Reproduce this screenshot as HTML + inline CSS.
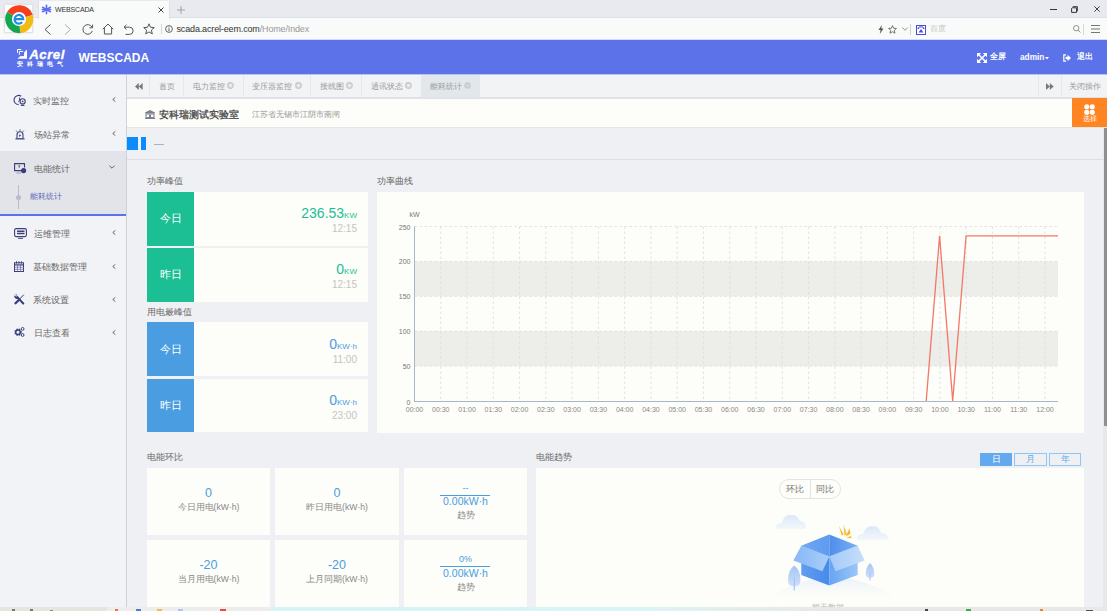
<!DOCTYPE html>
<html><head><meta charset="utf-8">
<style>
*{box-sizing:border-box}
html,body{margin:0;padding:0}
body{width:1107px;height:611px;overflow:hidden;position:relative;font-family:"Liberation Sans",sans-serif;background:#eef0f4;color:#666}
.a{position:absolute}
.t{position:absolute;white-space:nowrap;line-height:1}
svg{position:absolute;overflow:visible}
</style></head><body>

<!-- ============ BROWSER CHROME ============ -->
<div class="a" style="left:0;top:0;width:1107px;height:18px;background:#e8eaf0;border-bottom:1px solid #dcdfe6"></div>
<div class="a" style="left:0;top:18px;width:1107px;height:22px;background:#f9fafa"></div>
<div class="a" style="left:0;top:39px;width:1107px;height:1px;background:#d6daf2"></div>
<!-- browser logo -->
<div class="a" style="left:4px;top:4px;width:29px;height:29px;background:#fff;border:1px solid #e4e4e4;box-shadow:0 0 1px #ccc"></div>
<svg style="left:3.6px;top:3.6px" width="30" height="30" viewBox="0 0 27 27">
  <path d="M13.5 13.5 L2.7 7.3 A12.9 12.9 0 0 1 25.9 9.8 Z" fill="#f4401e"/>
  <path d="M13.5 13.5 L25.9 9.8 A12.9 12.9 0 0 1 14.6 26.4 Z" fill="#f2bb11"/>
  <path d="M13.5 13.5 L14.6 26.4 A12.9 12.9 0 0 1 2.7 7.3 Z" fill="#16a653"/>
  <circle cx="13.5" cy="13.5" r="6.4" fill="#fff"/>
  <path d="M9.6 13.6 H17.3 A3.9 3.9 0 1 0 16.4 16.3" fill="none" stroke="#1a8fe3" stroke-width="2"/>
</svg>
<!-- tab -->
<div class="a" style="left:37.5px;top:1px;width:132px;height:18px;background:#f9fafa;border-left:1px solid #dde0e6;border-right:1px solid #dde0e6"></div>
<svg style="left:42px;top:5px" width="9" height="9" viewBox="0 0 9 9"><g stroke="#5b72f0" stroke-width="1.6" stroke-linecap="round"><line x1="0.3" y1="4.5" x2="8.7" y2="4.5"/><line x1="4.5" y1="0.3" x2="4.5" y2="8.7"/><line x1="0.6" y1="2.3" x2="8.4" y2="6.7"/><line x1="0.6" y1="6.7" x2="8.4" y2="2.3"/></g><circle cx="4.5" cy="4.5" r="1.8" fill="#5b72f0"/></svg>
<div class="t" style="left:55px;top:6.3px;font-size:7px;color:#333;letter-spacing:-0.15px">WEBSCADA</div>
<svg style="left:158px;top:7px" width="6" height="6" viewBox="0 0 6 6"><path d="M0.5 0.5L5.5 5.5M5.5 0.5L0.5 5.5" stroke="#444" stroke-width="1"/></svg>
<svg style="left:177px;top:6px" width="8" height="8" viewBox="0 0 8 8"><path d="M4 0V8M0 4H8" stroke="#888" stroke-width="0.7"/></svg>
<!-- nav icons -->
<svg style="left:44px;top:24px" width="8" height="11" viewBox="0 0 8 11"><path d="M6.5 0.5L1 5.5L6.5 10.5" fill="none" stroke="#555" stroke-width="1"/></svg>
<svg style="left:64px;top:24px" width="8" height="11" viewBox="0 0 8 11"><path d="M1 0.5L6.5 5.5L1 10.5" fill="none" stroke="#aaa" stroke-width="1"/></svg>
<svg style="left:82px;top:24px" width="12" height="11" viewBox="0 0 12 11"><path d="M10 3.2A4.8 4.8 0 1 0 10.3 7" fill="none" stroke="#555" stroke-width="1"/><path d="M10.6 0.6V3.8H7.4" fill="none" stroke="#555" stroke-width="1"/></svg>
<svg style="left:102px;top:23px" width="12" height="12" viewBox="0 0 12 12"><path d="M0.8 6.2L6 1L11.2 6.2M2.4 4.8V11H9.6V4.8" fill="none" stroke="#555" stroke-width="1"/></svg>
<svg style="left:123px;top:24px" width="11" height="11" viewBox="0 0 11 11"><path d="M3.5 0.8L1 3.2L3.5 5.6M1 3.2H6.5A3.6 3.6 0 0 1 6.5 10.4H2.5" fill="none" stroke="#555" stroke-width="1"/></svg>
<svg style="left:143px;top:23px" width="12" height="12" viewBox="0 0 12 12"><path d="M6 0.8L7.5 4.3L11.3 4.6L8.4 7.1L9.3 10.9L6 8.9L2.7 10.9L3.6 7.1L0.7 4.6L4.5 4.3Z" fill="none" stroke="#555" stroke-width="1" stroke-linejoin="round"/></svg>
<div class="a" style="left:161px;top:24px;width:1px;height:10px;background:#d6d6d6"></div>
<svg style="left:165px;top:25px" width="8" height="8" viewBox="0 0 8 8"><circle cx="4" cy="4" r="3.4" fill="none" stroke="#555" stroke-width="0.9"/><path d="M4 3.3V6.2" stroke="#555" stroke-width="1"/><circle cx="4" cy="2" r="0.55" fill="#555"/></svg>
<div class="t" style="left:176.5px;top:24.5px;font-size:9px;letter-spacing:-0.15px;color:#333">scada.acrel-eem.com<span style="color:#999">/Home/Index</span></div>
<!-- right of address bar -->
<svg style="left:878px;top:25px" width="6" height="9" viewBox="0 0 6 9"><path d="M3.8 0L0.5 5H2.6L1.8 9L5.5 3.6H3.3Z" fill="#555"/></svg>
<svg style="left:888px;top:25px" width="9" height="9" viewBox="0 0 12 12"><path d="M6 0.8L7.5 4.3L11.3 4.6L8.4 7.1L9.3 10.9L6 8.9L2.7 10.9L3.6 7.1L0.7 4.6L4.5 4.3Z" fill="none" stroke="#666" stroke-width="1.2" stroke-linejoin="round"/></svg>
<svg style="left:902px;top:27px" width="6" height="4" viewBox="0 0 6 4"><path d="M0.3 0.5L3 3.3L5.7 0.5" fill="none" stroke="#777" stroke-width="0.8"/></svg>
<div class="a" style="left:910px;top:24px;width:1px;height:10.5px;background:#d0d0d0"></div>
<div class="a" style="left:916px;top:25px;width:10px;height:9.5px;border:1.3px solid #4a4ae0;background:#fff"></div>
<svg style="left:917px;top:26px" width="8" height="7" viewBox="0 0 8 7"><circle cx="1.4" cy="2.2" r="0.9" fill="#4a4ae0"/><circle cx="3" cy="0.9" r="0.8" fill="#4a4ae0"/><circle cx="5" cy="0.9" r="0.8" fill="#4a4ae0"/><circle cx="6.6" cy="2.2" r="0.9" fill="#4a4ae0"/><path d="M4 3L1.6 6.6H6.4Z" fill="#4a4ae0"/></svg>
<div class="t" style="left:930px;top:25px;font-size:8px;color:#c8c8c8">百度</div>
<svg style="left:1073px;top:25px" width="8" height="8" viewBox="0 0 8 8"><circle cx="3.2" cy="3.2" r="2.7" fill="none" stroke="#777" stroke-width="0.8"/><path d="M5.1 5.1L7.4 7.4" stroke="#777" stroke-width="0.8"/></svg>
<div class="a" style="left:1083px;top:24px;width:1px;height:11px;background:#d8d8d8"></div>
<svg style="left:1091px;top:25px" width="9" height="8" viewBox="0 0 9 8"><path d="M0 0.5H9M0 4H9M0 7.5H9" stroke="#666" stroke-width="0.9"/></svg>
<!-- window controls -->
<div class="a" style="left:1050px;top:9px;width:7px;height:1px;background:#333"></div>
<svg style="left:1071px;top:6px" width="7" height="7" viewBox="0 0 7 7"><path d="M1.2 1.8H5.6V6.4H0.6V2.4Z" fill="none" stroke="#333" stroke-width="1"/><path d="M1.8 0.6H6.4V5.2" fill="none" stroke="#333" stroke-width="0.9"/></svg>
<svg style="left:1094px;top:6px" width="6" height="6" viewBox="0 0 6 6"><path d="M0.3 0.3L5.7 5.7M5.7 0.3L0.3 5.7" stroke="#333" stroke-width="0.9"/></svg>

<!-- ============ HEADER ============ -->
<div class="a" style="left:0;top:40px;width:1107px;height:34px;background:#5b72e8"></div>
<!-- logo -->
<svg style="left:17px;top:49px" width="10" height="10" viewBox="0 0 10 10"><path d="M0.5 9.8L10 0.5V9.8Z" fill="#fff"/><rect x="1.9" y="1.9" width="5.2" height="5.2" fill="#5b72e8"/><path d="M0.5 3.8V0.5H4.2M2.4 5.8V2.4H6.2" fill="none" stroke="#fff" stroke-width="1"/></svg>
<div class="t" style="left:29.2px;top:47.5px;font-size:13.3px;font-weight:bold;font-style:italic;color:#fff;letter-spacing:0.5px;-webkit-text-stroke:0.3px #fff">Acrel</div>
<div class="t" style="left:17px;top:60.8px;font-size:6.3px;color:#fff;letter-spacing:4px;font-weight:bold">安科瑞电气</div>
<div class="t" style="left:78.5px;top:52px;font-size:12px;font-weight:bold;color:#fff">WEBSCADA</div>
<!-- right -->
<svg style="left:977px;top:52.5px" width="10" height="10" viewBox="0 0 10 10"><path d="M1.5 1.5L8.5 8.5M8.5 1.5L1.5 8.5" stroke="#fff" stroke-width="1.6"/><g fill="#fff"><path d="M0 0H4.2L0 4.2Z"/><path d="M10 0V4.2L5.8 0Z"/><path d="M0 10V5.8L4.2 10Z"/><path d="M10 10H5.8L10 5.8Z"/></g></svg>
<div class="t" style="left:990px;top:52.5px;font-size:8px;font-weight:bold;color:#fff;margin-top:0.8px">全屏</div>
<div class="t" style="left:1020px;top:52.5px;font-size:8.3px;font-weight:bold;color:#fff">admin</div>
<svg style="left:1045px;top:56.5px" width="4" height="3" viewBox="0 0 4 3"><path d="M0 0H4L2 2.5Z" fill="#fff"/></svg>
<svg style="left:1063px;top:53.5px" width="8" height="8" viewBox="0 0 8 8"><path d="M3 0.8H0.8V7.2H3" fill="none" stroke="#fff" stroke-width="1.2"/><path d="M2.6 2.8H4.6V0.8L8 4L4.6 7.2V5.2H2.6Z" fill="#fff"/></svg>
<div class="t" style="left:1076.5px;top:52.5px;font-size:8px;font-weight:bold;color:#fff;margin-top:0.8px">退出</div>

<!-- ============ SIDEBAR ============ -->
<div class="a" style="left:0;top:74px;width:127px;height:533px;background:#f2f3f6;border-right:1px solid #cfd2da"></div>
<div class="a" style="left:0;top:151px;width:126px;height:65px;background:#e3e4e9"></div>
<div class="a" style="left:0;top:214px;width:126px;height:2px;background:#5b72e8"></div>
<!-- sidebar items -->
<svg style="left:14.5px;top:95px" width="11" height="11" viewBox="0 0 11 11"><path d="M6.2 1.2A4.6 4.6 0 1 0 3.6 9.6" fill="none" stroke="#3b3d7c" stroke-width="1.1"/><path d="M4.6 2.6V5.3L3.2 6.6" fill="none" stroke="#3b3d7c" stroke-width="1"/><circle cx="7.6" cy="6.4" r="2.6" fill="none" stroke="#3b3d7c" stroke-width="1.1"/><circle cx="7.6" cy="6.4" r="0.9" fill="#3b3d7c"/><path d="M5.8 10.4H9.4" stroke="#3b3d7c" stroke-width="1.1"/></svg>
<div class="t" style="left:33px;top:96.8px;font-size:9px;color:#666">实时监控</div>
<svg style="left:111.5px;top:97px" width="4" height="5" viewBox="0 0 4 5"><path d="M3.3 0.4L0.8 2.5L3.3 4.6" fill="none" stroke="#555" stroke-width="0.9"/></svg>

<svg style="left:15px;top:129px" width="10" height="11" viewBox="0 0 10 11"><path d="M2 9V5.8A3 3 0 0 1 8 5.8V9" fill="none" stroke="#3b3d7c" stroke-width="1.1"/><path d="M0.5 9.8H9.5" stroke="#3b3d7c" stroke-width="1.3"/><path d="M5 0.3V1.8M1.2 1.6L2.2 2.8M8.8 1.6L7.8 2.8" stroke="#3b3d7c" stroke-width="0.9"/><path d="M4.2 5.3L6.2 6.6L4.2 7.9Z" fill="#3b3d7c"/></svg>
<div class="t" style="left:33.5px;top:130.5px;font-size:9px;color:#666">场站异常</div>
<svg style="left:111.5px;top:131px" width="4" height="5" viewBox="0 0 4 5"><path d="M3.3 0.4L0.8 2.5L3.3 4.6" fill="none" stroke="#555" stroke-width="0.9"/></svg>

<svg style="left:14px;top:162.5px" width="13" height="11" viewBox="0 0 13 11"><path d="M10.5 4.5V0.6H0.6V7.6H7" fill="none" stroke="#3b3d7c" stroke-width="1.1"/><path d="M2.5 10H7" stroke="#9a9ab8" stroke-width="1"/><path d="M5.2 2V4.6" stroke="#3b3d7c" stroke-width="1"/><circle cx="9.6" cy="7.6" r="2.6" fill="#3b3d7c"/></svg>
<div class="t" style="left:34px;top:165px;font-size:9px;color:#666">电能统计</div>
<svg style="left:109px;top:165px" width="6" height="4" viewBox="0 0 6 4"><path d="M0.4 0.6L3 3.2L5.6 0.6" fill="none" stroke="#555" stroke-width="0.9"/></svg>
<div class="a" style="left:18px;top:185px;width:1px;height:24px;background:#b9bccb"></div>
<div class="a" style="left:16px;top:194.5px;width:5px;height:5px;border-radius:50%;background:#b9bccb"></div>
<div class="t" style="left:30px;top:193px;font-size:8.2px;color:#5a64b8">能耗统计</div>

<svg style="left:14px;top:228px" width="13" height="11" viewBox="0 0 13 11"><rect x="0.6" y="0.6" width="11.8" height="8" rx="1.5" fill="none" stroke="#3b3d7c" stroke-width="1.1"/><path d="M3 3.2H10.5M3 5.5H10.5" stroke="#3b3d7c" stroke-width="1.4"/><path d="M4 10.4H9" stroke="#3b3d7c" stroke-width="0.9"/></svg>
<div class="t" style="left:34px;top:229.5px;font-size:9px;color:#666">运维管理</div>
<svg style="left:111.5px;top:230px" width="4" height="5" viewBox="0 0 4 5"><path d="M3.3 0.4L0.8 2.5L3.3 4.6" fill="none" stroke="#555" stroke-width="0.9"/></svg>

<svg style="left:14px;top:260.5px" width="10" height="11" viewBox="0 0 10 11"><rect x="0.5" y="1.8" width="9" height="8.7" fill="none" stroke="#3b3d7c" stroke-width="1"/><path d="M0.5 3.9H9.5" stroke="#3b3d7c" stroke-width="1.2"/><path d="M0.5 6.2H9.5M0.5 8.3H9.5M3.5 3.9V10.5M6.5 3.9V10.5" stroke="#6a6c9c" stroke-width="0.7"/><path d="M2.5 0.2V2.6M5 0.2V2.6M7.5 0.2V2.6" stroke="#3b3d7c" stroke-width="0.9"/></svg>
<div class="t" style="left:32.5px;top:262.5px;font-size:9px;color:#666">基础数据管理</div>
<svg style="left:111.5px;top:264px" width="4" height="5" viewBox="0 0 4 5"><path d="M3.3 0.4L0.8 2.5L3.3 4.6" fill="none" stroke="#555" stroke-width="0.9"/></svg>

<svg style="left:14px;top:294px" width="11" height="11" viewBox="0 0 11 11"><path d="M9.9 0.7L5.8 4.8" stroke="#3b3d7c" stroke-width="1"/><path d="M5.6 5.2L1.5 9.3" stroke="#3b3d7c" stroke-width="2.3" stroke-linecap="round"/><path d="M3.6 3.6L9.3 9.5" stroke="#3b3d7c" stroke-width="2" stroke-linecap="round"/><path d="M0.2 2.2A3 3 0 0 0 4.9 4.5L5.2 3.6L3 1.6L2.2 0.1A3 3 0 0 0 0.2 2.2Z" fill="#3b3d7c"/><path d="M0.8 0.6L2.6 2.4" stroke="#f2f3f6" stroke-width="1.3"/></svg>
<div class="t" style="left:32.6px;top:296px;font-size:9px;color:#666">系统设置</div>
<svg style="left:111.5px;top:297px" width="4" height="5" viewBox="0 0 4 5"><path d="M3.3 0.4L0.8 2.5L3.3 4.6" fill="none" stroke="#555" stroke-width="0.9"/></svg>

<svg style="left:14px;top:327px" width="11" height="10" viewBox="0 0 11 10"><circle cx="4" cy="5.2" r="2.6" fill="none" stroke="#3b3d7c" stroke-width="2.2" stroke-dasharray="1.2 0.9"/><circle cx="4" cy="5.2" r="2.4" fill="none" stroke="#3b3d7c" stroke-width="1.2"/><circle cx="8.6" cy="1.9" r="1.4" fill="none" stroke="#3b3d7c" stroke-width="1"/><circle cx="8.6" cy="8" r="1.4" fill="none" stroke="#3b3d7c" stroke-width="1"/></svg>
<div class="t" style="left:34px;top:328.5px;font-size:9px;color:#666">日志查看</div>
<svg style="left:111.5px;top:330px" width="4" height="5" viewBox="0 0 4 5"><path d="M3.3 0.4L0.8 2.5L3.3 4.6" fill="none" stroke="#555" stroke-width="0.9"/></svg>


<!-- ============ TAB BAR ============ -->
<div class="a" style="left:127px;top:74px;width:980px;height:25px;background:#f1f3f4;border-bottom:2px solid #dfe3e6"></div>
<!-- tabs -->
<div class="a" style="left:149px;top:74px;width:1px;height:23px;background:#e6e8eb"></div>
<div class="a" style="left:183px;top:74px;width:1px;height:23px;background:#e6e8eb"></div>
<div class="a" style="left:242.5px;top:74px;width:1px;height:23px;background:#e6e8eb"></div>
<div class="a" style="left:310px;top:74px;width:1px;height:23px;background:#e6e8eb"></div>
<div class="a" style="left:361px;top:74px;width:1px;height:23px;background:#e6e8eb"></div>
<div class="a" style="left:420.5px;top:74px;width:59.5px;height:23px;background:#e1e7eb"></div>
<div class="a" style="left:1038px;top:74px;width:1px;height:23px;background:#e6e8eb"></div>
<div class="a" style="left:1061px;top:74px;width:1px;height:23px;background:#e6e8eb"></div>
<svg style="left:135px;top:83px" width="8" height="7" viewBox="0 0 8 7"><path d="M3.8 0V7L0 3.5Z M7.6 0V7L3.8 3.5Z" fill="#777"/></svg>
<div class="t" style="left:158.5px;top:82.8px;font-size:8.2px;color:#9a9a9a">首页</div>
<div class="t" style="left:192.5px;top:82.8px;font-size:8.2px;color:#9a9a9a">电力监控</div>
<div class="t" style="left:251.5px;top:82.8px;font-size:8.2px;color:#9a9a9a">变压器监控</div>
<div class="t" style="left:319.5px;top:82.8px;font-size:8.2px;color:#9a9a9a">接线图</div>
<div class="t" style="left:370.5px;top:82.8px;font-size:8.2px;color:#9a9a9a">通讯状态</div>
<div class="t" style="left:429.5px;top:82.8px;font-size:8.2px;color:#9a9a9a">能耗统计</div>
<svg style="left:226.6px;top:82px" width="7" height="7" viewBox="0 0 7 7"><circle cx="3.5" cy="3.5" r="2.75" fill="#e3e4e6" stroke="#c6c8cb" stroke-width="1.3"/><path d="M2.6 2.6L4.4 4.4M4.4 2.6L2.6 4.4" stroke="#f4f5f6" stroke-width="0.8"/></svg>
<svg style="left:294.6px;top:82px" width="7" height="7" viewBox="0 0 7 7"><circle cx="3.5" cy="3.5" r="2.75" fill="#e3e4e6" stroke="#c6c8cb" stroke-width="1.3"/><path d="M2.6 2.6L4.4 4.4M4.4 2.6L2.6 4.4" stroke="#f4f5f6" stroke-width="0.8"/></svg>
<svg style="left:345.6px;top:82px" width="7" height="7" viewBox="0 0 7 7"><circle cx="3.5" cy="3.5" r="2.75" fill="#e3e4e6" stroke="#c6c8cb" stroke-width="1.3"/><path d="M2.6 2.6L4.4 4.4M4.4 2.6L2.6 4.4" stroke="#f4f5f6" stroke-width="0.8"/></svg>
<svg style="left:404.6px;top:82px" width="7" height="7" viewBox="0 0 7 7"><circle cx="3.5" cy="3.5" r="2.75" fill="#e3e4e6" stroke="#c6c8cb" stroke-width="1.3"/><path d="M2.6 2.6L4.4 4.4M4.4 2.6L2.6 4.4" stroke="#f4f5f6" stroke-width="0.8"/></svg>
<svg style="left:463.6px;top:82px" width="7" height="7" viewBox="0 0 7 7"><circle cx="3.5" cy="3.5" r="3.2" fill="#c8cacd"/><path d="M2.2 2.2L4.8 4.8M4.8 2.2L2.2 4.8" stroke="#e4e9ed" stroke-width="0.9"/></svg>
<svg style="left:1046px;top:83px" width="8" height="7" viewBox="0 0 8 7"><path d="M0 0V7L3.8 3.5Z M3.8 0V7L7.6 3.5Z" fill="#777"/></svg>
<div class="t" style="left:1069px;top:82.8px;font-size:8.2px;color:#9a9a9a">关闭操作</div>


<div class="a" style="left:0;top:74px;width:1107px;height:1px;background:#b9c2f0"></div>
<!-- ============ TITLE BAR ============ -->
<div class="a" style="left:127px;top:99px;width:945px;height:28px;background:#fdfdfa"></div>
<div class="a" style="left:1072px;top:98px;width:35px;height:29px;background:#ff8422"></div>
<div class="a" style="left:127px;top:127px;width:976px;height:1px;background:#e4e6ea"></div>
<svg style="left:144.5px;top:110px" width="10" height="9" viewBox="0 0 10 9"><path d="M5 0L10 2.6V3.4H0V2.6Z" fill="#7b7f8f"/><path d="M1 4H9V7.6H1Z" fill="none" stroke="#7b7f8f" stroke-width="1"/><rect x="4" y="4.8" width="2" height="3" fill="#7b7f8f"/><rect x="0" y="7.8" width="10" height="1.2" fill="#7b7f8f"/></svg>
<div class="t" style="left:159px;top:110.3px;font-size:9.8px;font-weight:bold;color:#555">安科瑞测试实验室</div>
<div class="t" style="left:252px;top:111.2px;font-size:8.2px;color:#999">江苏省无锡市江阴市南闸</div>
<!-- select button -->
<svg style="left:1084px;top:103.5px" width="11" height="11" viewBox="0 0 12 12"><g fill="#fff"><circle cx="3" cy="3" r="2.8"/><circle cx="9" cy="3" r="2.8"/><circle cx="3" cy="9" r="2.8"/><circle cx="9" cy="9" r="2.8"/></g></svg>
<div class="t" style="left:1082.5px;top:116.3px;font-size:6.8px;color:#fff">选择</div>

<!-- blue squares row -->
<div class="a" style="left:127px;top:137px;width:11px;height:13px;background:#0a8cff"></div>
<div class="a" style="left:141px;top:137px;width:5px;height:13px;background:#0a8cff"></div>
<div class="a" style="left:154px;top:144px;width:10px;height:1.2px;background:#9db8c8"></div>
<div class="a" style="left:127px;top:159px;width:976px;height:1px;background:#dcdee3"></div>

<!-- scrollbar -->
<div class="a" style="left:1103px;top:127px;width:4px;height:480px;background:#e7e8ec"></div>
<div class="a" style="left:1103.5px;top:128px;width:3.5px;height:298px;background:#8e8e93"></div>

<!-- ====== CONTENT ====== -->
<div class="t" style="left:147px;top:176.5px;font-size:9px;color:#666">功率峰值</div>
<div class="a" style="left:147px;top:192px;width:221px;height:53.5px;background:#fdfdf9"></div>
<div class="a" style="left:147px;top:192px;width:46.5px;height:53.5px;background:#1bbf93"></div>
<div class="t" style="left:160px;top:212.8px;font-size:10.5px;color:#fff">今日</div>
<div class="t" style="left:0;width:357px;text-align:right;top:205.7px;font-size:14px;color:#1bbf93">236.53<span style="font-size:8px">KW</span></div>
<div class="t" style="left:0;width:357px;text-align:right;top:223.5px;font-size:10px;color:#c4c4c4">12:15</div>

<div class="a" style="left:147px;top:248px;width:221px;height:53.5px;background:#fdfdf9"></div>
<div class="a" style="left:147px;top:248px;width:46.5px;height:53.5px;background:#1bbf93"></div>
<div class="t" style="left:160px;top:268.8px;font-size:10.5px;color:#fff">昨日</div>
<div class="t" style="left:0;width:357px;text-align:right;top:262.3px;font-size:14px;color:#1bbf93">0<span style="font-size:8px">KW</span></div>
<div class="t" style="left:0;width:357px;text-align:right;top:279.5px;font-size:10px;color:#c4c4c4">12:15</div>

<div class="t" style="left:147px;top:307.7px;font-size:9px;color:#666">用电最峰值</div>
<div class="a" style="left:147px;top:322px;width:221px;height:54px;background:#fdfdf9"></div>
<div class="a" style="left:147px;top:322px;width:46.5px;height:54px;background:#4a9de0"></div>
<div class="t" style="left:160px;top:343.5px;font-size:10.5px;color:#fff">今日</div>
<div class="t" style="left:0;width:357px;text-align:right;top:337px;font-size:14px;color:#4a9de0">0<span style="font-size:8px">KW·h</span></div>
<div class="t" style="left:0;width:357px;text-align:right;top:354.5px;font-size:10px;color:#c4c4c4">11:00</div>

<div class="a" style="left:147px;top:379px;width:221px;height:53px;background:#fdfdf9"></div>
<div class="a" style="left:147px;top:379px;width:46.5px;height:53px;background:#4a9de0"></div>
<div class="t" style="left:160px;top:400px;font-size:10.5px;color:#fff">昨日</div>
<div class="t" style="left:0;width:357px;text-align:right;top:393px;font-size:14px;color:#4a9de0">0<span style="font-size:8px">KW·h</span></div>
<div class="t" style="left:0;width:357px;text-align:right;top:410.5px;font-size:10px;color:#c4c4c4">23:00</div>

<!-- chart -->
<div class="t" style="left:377px;top:176.5px;font-size:9px;color:#666">功率曲线</div>
<div class="a" style="left:377px;top:192px;width:706.5px;height:240.5px;background:#fdfdf9"></div>
<svg style="left:0;top:0" width="1107" height="611" viewBox="0 0 1107 611">
  <rect x="414.5" y="261.4" width="643.5" height="34.9" fill="#ededea"/>
  <rect x="414.5" y="331.2" width="643.5" height="34.9" fill="#ededea"/>
  <g stroke="#dcdcdc" stroke-width="0.8" stroke-dasharray="2.5 2.5" id="hg">
    <line x1="414.5" y1="226.5" x2="1058" y2="226.5"/>
    <line x1="414.5" y1="261.4" x2="1058" y2="261.4"/>
    <line x1="414.5" y1="296.3" x2="1058" y2="296.3"/>
    <line x1="414.5" y1="331.2" x2="1058" y2="331.2"/>
    <line x1="414.5" y1="366.1" x2="1058" y2="366.1"/>
  </g>
  <g stroke="#dcdcdc" stroke-width="0.8" stroke-dasharray="2.5 2.5"><line x1="440.77" y1="226.5" x2="440.77" y2="401"/><line x1="467.04" y1="226.5" x2="467.04" y2="401"/><line x1="493.31" y1="226.5" x2="493.31" y2="401"/><line x1="519.58" y1="226.5" x2="519.58" y2="401"/><line x1="545.85" y1="226.5" x2="545.85" y2="401"/><line x1="572.12" y1="226.5" x2="572.12" y2="401"/><line x1="598.40" y1="226.5" x2="598.40" y2="401"/><line x1="624.67" y1="226.5" x2="624.67" y2="401"/><line x1="650.94" y1="226.5" x2="650.94" y2="401"/><line x1="677.21" y1="226.5" x2="677.21" y2="401"/><line x1="703.48" y1="226.5" x2="703.48" y2="401"/><line x1="729.75" y1="226.5" x2="729.75" y2="401"/><line x1="756.02" y1="226.5" x2="756.02" y2="401"/><line x1="782.29" y1="226.5" x2="782.29" y2="401"/><line x1="808.56" y1="226.5" x2="808.56" y2="401"/><line x1="834.83" y1="226.5" x2="834.83" y2="401"/><line x1="861.10" y1="226.5" x2="861.10" y2="401"/><line x1="887.38" y1="226.5" x2="887.38" y2="401"/><line x1="913.65" y1="226.5" x2="913.65" y2="401"/><line x1="939.92" y1="226.5" x2="939.92" y2="401"/><line x1="966.19" y1="226.5" x2="966.19" y2="401"/><line x1="992.46" y1="226.5" x2="992.46" y2="401"/><line x1="1018.73" y1="226.5" x2="1018.73" y2="401"/><line x1="1045.00" y1="226.5" x2="1045.00" y2="401"/></g>
  <line x1="414.5" y1="226.5" x2="414.5" y2="402" stroke="#a9b6c5" stroke-width="1"/>
  <line x1="414.5" y1="401.5" x2="1058" y2="401.5" stroke="#a9b6c5" stroke-width="1"/>
  <polyline points="926.2,401 939.6,235.9 952.7,401 966.1,235.9 1058,235.9" fill="none" stroke="#f47767" stroke-width="1.3" stroke-linejoin="miter"/>
</svg>
<div class="t" style="left:409.5px;top:210.5px;font-size:7px;color:#777">kW</div>
<div class="t" style="left:360px;width:50.5px;text-align:right;top:223.5px;font-size:7px;color:#777">250</div>
<div class="t" style="left:360px;width:50.5px;text-align:right;top:258.4px;font-size:7px;color:#777">200</div>
<div class="t" style="left:360px;width:50.5px;text-align:right;top:293.3px;font-size:7px;color:#777">150</div>
<div class="t" style="left:360px;width:50.5px;text-align:right;top:328.2px;font-size:7px;color:#777">100</div>
<div class="t" style="left:360px;width:50.5px;text-align:right;top:363.1px;font-size:7px;color:#777">50</div>
<div class="t" style="left:360px;width:50.5px;text-align:right;top:398.8px;font-size:7px;color:#777">0</div>

<div class="t" style="left:399.50px;width:30px;text-align:center;top:406px;font-size:7px;color:#888">00:00</div>
<div class="t" style="left:425.77px;width:30px;text-align:center;top:406px;font-size:7px;color:#888">00:30</div>
<div class="t" style="left:452.04px;width:30px;text-align:center;top:406px;font-size:7px;color:#888">01:00</div>
<div class="t" style="left:478.31px;width:30px;text-align:center;top:406px;font-size:7px;color:#888">01:30</div>
<div class="t" style="left:504.58px;width:30px;text-align:center;top:406px;font-size:7px;color:#888">02:00</div>
<div class="t" style="left:530.85px;width:30px;text-align:center;top:406px;font-size:7px;color:#888">02:30</div>
<div class="t" style="left:557.12px;width:30px;text-align:center;top:406px;font-size:7px;color:#888">03:00</div>
<div class="t" style="left:583.40px;width:30px;text-align:center;top:406px;font-size:7px;color:#888">03:30</div>
<div class="t" style="left:609.67px;width:30px;text-align:center;top:406px;font-size:7px;color:#888">04:00</div>
<div class="t" style="left:635.94px;width:30px;text-align:center;top:406px;font-size:7px;color:#888">04:30</div>
<div class="t" style="left:662.21px;width:30px;text-align:center;top:406px;font-size:7px;color:#888">05:00</div>
<div class="t" style="left:688.48px;width:30px;text-align:center;top:406px;font-size:7px;color:#888">05:30</div>
<div class="t" style="left:714.75px;width:30px;text-align:center;top:406px;font-size:7px;color:#888">06:00</div>
<div class="t" style="left:741.02px;width:30px;text-align:center;top:406px;font-size:7px;color:#888">06:30</div>
<div class="t" style="left:767.29px;width:30px;text-align:center;top:406px;font-size:7px;color:#888">07:00</div>
<div class="t" style="left:793.56px;width:30px;text-align:center;top:406px;font-size:7px;color:#888">07:30</div>
<div class="t" style="left:819.83px;width:30px;text-align:center;top:406px;font-size:7px;color:#888">08:00</div>
<div class="t" style="left:846.10px;width:30px;text-align:center;top:406px;font-size:7px;color:#888">08:30</div>
<div class="t" style="left:872.38px;width:30px;text-align:center;top:406px;font-size:7px;color:#888">09:00</div>
<div class="t" style="left:898.65px;width:30px;text-align:center;top:406px;font-size:7px;color:#888">09:30</div>
<div class="t" style="left:924.92px;width:30px;text-align:center;top:406px;font-size:7px;color:#888">10:00</div>
<div class="t" style="left:951.19px;width:30px;text-align:center;top:406px;font-size:7px;color:#888">10:30</div>
<div class="t" style="left:977.46px;width:30px;text-align:center;top:406px;font-size:7px;color:#888">11:00</div>
<div class="t" style="left:1003.73px;width:30px;text-align:center;top:406px;font-size:7px;color:#888">11:30</div>
<div class="t" style="left:1030.00px;width:30px;text-align:center;top:406px;font-size:7px;color:#888">12:00</div>


<!-- bottom -->
<div class="t" style="left:147px;top:452.5px;font-size:9px;color:#666">电能环比</div>
<div class="a" style="left:147px;top:468px;width:123px;height:67px;background:#fdfdf9"></div>
<div class="a" style="left:275px;top:468px;width:124px;height:67px;background:#fdfdf9"></div>
<div class="a" style="left:404px;top:468px;width:123px;height:67px;background:#fdfdf9"></div>
<div class="a" style="left:147px;top:539.5px;width:123px;height:70px;background:#fdfdf9"></div>
<div class="a" style="left:275px;top:539.5px;width:124px;height:70px;background:#fdfdf9"></div>
<div class="a" style="left:404px;top:539.5px;width:123px;height:70px;background:#fdfdf9"></div>

<div class="t" style="left:147px;width:123px;text-align:center;top:486.5px;font-size:12.5px;color:#4a9de0">0</div>
<div class="t" style="left:147px;width:123px;text-align:center;top:503px;font-size:8.6px;color:#888">今日用电(kW·h)</div>
<div class="t" style="left:275px;width:124px;text-align:center;top:486.5px;font-size:12.5px;color:#4a9de0">0</div>
<div class="t" style="left:275px;width:124px;text-align:center;top:503px;font-size:8.6px;color:#888">昨日用电(kW·h)</div>
<div class="t" style="left:404px;width:123px;text-align:center;top:484px;font-size:9px;color:#4a9de0">--</div>
<div class="a" style="left:440px;top:495px;width:50px;height:1px;background:#4a9de0"></div>
<div class="t" style="left:404px;width:123px;text-align:center;top:496px;font-size:10.5px;color:#4a9de0">0.00kW·h</div>
<div class="t" style="left:404px;width:123px;text-align:center;top:511px;font-size:8.6px;color:#888">趋势</div>

<div class="t" style="left:147px;width:123px;text-align:center;top:558.5px;font-size:12.5px;color:#4a9de0">-20</div>
<div class="t" style="left:147px;width:123px;text-align:center;top:575px;font-size:8.6px;color:#888">当月用电(kW·h)</div>
<div class="t" style="left:275px;width:124px;text-align:center;top:558.5px;font-size:12.5px;color:#4a9de0">-20</div>
<div class="t" style="left:275px;width:124px;text-align:center;top:575px;font-size:8.6px;color:#888">上月同期(kW·h)</div>
<div class="t" style="left:404px;width:123px;text-align:center;top:555px;font-size:9px;color:#4a9de0">0%</div>
<div class="a" style="left:440px;top:566px;width:50px;height:1px;background:#4a9de0"></div>
<div class="t" style="left:404px;width:123px;text-align:center;top:567.5px;font-size:10.5px;color:#4a9de0">0.00kW·h</div>
<div class="t" style="left:404px;width:123px;text-align:center;top:582.5px;font-size:8.6px;color:#888">趋势</div>

<div class="t" style="left:536px;top:452.5px;font-size:9px;color:#666">电能趋势</div>
<div class="a" style="left:536px;top:468px;width:547.5px;height:145px;background:#fdfdf9"></div>
<div class="a" style="left:980px;top:453px;width:32px;height:13px;background:#62a9ee"></div>
<div class="t" style="left:980px;width:32px;text-align:center;top:455px;font-size:8.5px;color:#fff">日</div>
<div class="a" style="left:1014px;top:453px;width:33px;height:13px;border:1px solid #93c4f2"></div>
<div class="t" style="left:1014px;width:33px;text-align:center;top:455px;font-size:8.5px;color:#62a9ee">月</div>
<div class="a" style="left:1049px;top:453px;width:32px;height:13px;border:1px solid #93c4f2"></div>
<div class="t" style="left:1049px;width:32px;text-align:center;top:455px;font-size:8.5px;color:#62a9ee">年</div>

<div class="a" style="left:779px;top:479px;width:62px;height:19.5px;border:1px solid #e3e3e3;border-radius:10px"></div>
<div class="a" style="left:809.5px;top:479px;width:1px;height:19.5px;background:#e3e3e3"></div>
<div class="t" style="left:786px;top:484.5px;font-size:8.5px;color:#777">环比</div>
<div class="t" style="left:816px;top:484.5px;font-size:8.5px;color:#777">同比</div>
<svg style="left:770px;top:505px" width="125" height="102" viewBox="0 0 125 102">
  <defs>
    <linearGradient id="gh" x1="0" y1="0" x2="0" y2="1"><stop offset="0" stop-color="#eaf1fb"/><stop offset="1" stop-color="#fdfdf9" stop-opacity="0"/></linearGradient>
    <linearGradient id="gc" x1="0" y1="0" x2="0" y2="1"><stop offset="0" stop-color="#dbe8f9"/><stop offset="1" stop-color="#f3f7fb"/></linearGradient>
    <linearGradient id="gt" x1="0" y1="0" x2="0" y2="1"><stop offset="0" stop-color="#a3c5f4"/><stop offset="1" stop-color="#cfe1fa"/></linearGradient>
    <linearGradient id="gil" x1="0" y1="0" x2="1" y2="0"><stop offset="0" stop-color="#6ea7f3"/><stop offset="1" stop-color="#5e9bf0"/></linearGradient>
    <linearGradient id="gir" x1="0" y1="0" x2="1" y2="0"><stop offset="0" stop-color="#4f8deb"/><stop offset="1" stop-color="#78b0f5"/></linearGradient>
    <linearGradient id="gbl" x1="0" y1="0" x2="1" y2="0"><stop offset="0" stop-color="#5f9ef1"/><stop offset="1" stop-color="#4889ea"/></linearGradient>
    <linearGradient id="gbr" x1="0" y1="0" x2="1" y2="0"><stop offset="0" stop-color="#66a4f3"/><stop offset="1" stop-color="#9cc7f8"/></linearGradient>
    <linearGradient id="gfl" x1="0" y1="0" x2="1" y2="0"><stop offset="0" stop-color="#88b8f6"/><stop offset="1" stop-color="#a9cdf8"/></linearGradient>
    <linearGradient id="gfr" x1="0" y1="0" x2="1" y2="0"><stop offset="0" stop-color="#a3c9f8"/><stop offset="1" stop-color="#c6defb"/></linearGradient>
  </defs>
  <path d="M3 90 Q62 55 122 90 L122 97 L3 97Z" fill="url(#gh)"/>
  <path d="M5 24 Q5 18 12 18 Q14 9 21 10 Q27 9 30 16 Q36 16 36 24Z" fill="url(#gc)"/>
  <path d="M87 35 Q87 29 93 29 Q96 20 103 21 Q109 21 111 28 Q118 28 119 35Z" fill="url(#gc)"/>
  <path d="M69 21L71.8 30.5L73.6 29.6Z" fill="#f6b52b"/>
  <path d="M73.5 19.5L74.4 30.6L77 29.4Z" fill="#f9c23c"/>
  <path d="M79.5 23.5L75.8 31.5L80.5 28.8Z" fill="#f6b52b"/>
  <path d="M81 30.8L76.3 33L81.5 33.2Z" fill="#f9c23c"/>
  <path d="M24.3 60.5 Q30.5 65 30.5 75 Q30.5 81.5 24.3 81.5 Q18 81.5 18 75 Q18 65 24.3 60.5Z" fill="url(#gt)"/>
  <path d="M24.3 72V85.5" stroke="#a0c1f0" stroke-width="1.1"/>
  <path d="M100 58 Q104.2 62 104.2 69 Q104.2 73 100 73 Q95.8 73 95.8 69 Q95.8 62 100 58Z" fill="url(#gt)"/>
  <path d="M100 67V75.5" stroke="#a0c1f0" stroke-width="0.9"/>
  <path d="M31.3 40.7 L59.3 29.4 L59.3 51.5Z" fill="url(#gil)"/>
  <path d="M59.3 29.4 L87.7 40.7 L59.3 51.5Z" fill="url(#gir)"/>
  <path d="M31.3 40.7 L59.3 51.5 L59.3 80.4 L31.3 70.1Z" fill="url(#gbl)"/>
  <path d="M59.3 51.5 L87.7 40.7 L87.7 70.1 L59.3 80.4Z" fill="url(#gbr)"/>
  <path d="M31.3 40.7 L59.3 51.5 L52.4 66.2 L23.4 55.4Z" fill="url(#gfl)"/>
  <path d="M87.7 40.7 L59.3 51.5 L65.6 66.2 L94.6 55.4Z" fill="url(#gfr)"/>
</svg>
<div class="t" style="left:812px;top:604px;font-size:8px;color:#bbb">暂无数据</div>



<!-- taskbar -->
<div class="a" style="left:0;top:606.8px;width:1107px;height:5px;background:linear-gradient(90deg,#e6e6e1 0,#e6e6e1 107px,#ededeb 107px,#ededeb 270px,#d6f3f6 270px,#dcf4f5 640px,#e8e8e4 840px,#e8e8e4 1107px)"></div>
<div class="a" style="left:12px;top:609px;width:3px;height:2px;background:#777"></div>
<div class="a" style="left:30px;top:609px;width:3px;height:2px;background:#777"></div>
<div class="a" style="left:50px;top:609.5px;width:3px;height:2px;background:#888"></div>
<div class="a" style="left:115px;top:609px;width:3px;height:2px;background:#f07050"></div>
<div class="a" style="left:136px;top:609px;width:5px;height:2px;background:#4a7be0"></div>
<div class="a" style="left:157px;top:609px;width:5px;height:2px;background:#f0c040"></div>
<div class="a" style="left:178px;top:609px;width:5px;height:2px;background:#b0c4f0"></div>
<div class="a" style="left:220px;top:609px;width:6px;height:2px;background:#e84848"></div>
<div class="a" style="left:925px;top:609px;width:3px;height:2px;background:#444"></div>
<div class="a" style="left:966px;top:609px;width:5px;height:2px;background:#30b050"></div>
<div class="a" style="left:1040px;top:609px;width:3px;height:2px;background:#f08030"></div>
<div class="a" style="left:1086px;top:609.5px;width:7px;height:1.5px;background:#555"></div>
</body></html>
